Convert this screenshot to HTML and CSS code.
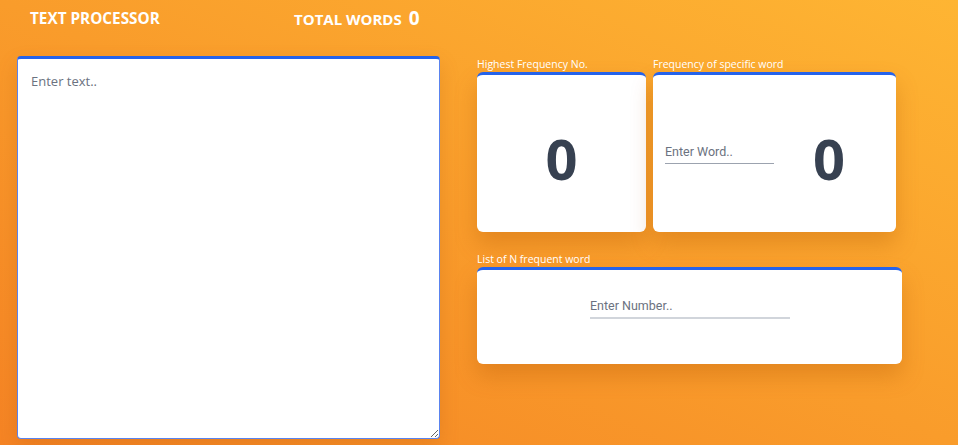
FILE: index.html
```html
<!DOCTYPE html>
<html lang="en">
<head>
<meta charset="utf-8">
<title>Text Processor</title>
<link rel="stylesheet" href="styles.css">
</head>
<body>
<header class="topbar">
  <h1 class="title">TEXT PROCESSOR</h1>
  <div class="total">TOTAL WORDS <span class="total-num">0</span></div>
</header>
<main class="layout">
  <textarea class="editor" placeholder="Enter text.."></textarea>
  <section class="side">
    <div class="row">
      <div class="block block-high">
        <div class="label">Highest Frequency No.</div>
        <div class="card card-center">
          <span class="big">0</span>
        </div>
      </div>
      <div class="block block-word">
        <div class="label">Frequency of specific word</div>
        <div class="card card-word">
          <input class="field field-word" type="text" placeholder="Enter Word..">
          <span class="big big-word">0</span>
        </div>
      </div>
    </div>
    <div class="block block-list">
      <div class="label">List of N frequent word</div>
      <div class="card card-list">
        <input class="field field-num" type="text" placeholder="Enter Number..">
      </div>
    </div>
  </section>
</main>
</body>
</html>
```
FILE: styles.css
```css
* { box-sizing: border-box; }
html, body { margin: 0; height: 100%; }
body {
  width: 958px;
  height: 445px;
  overflow: hidden;
  font-family: "Open Sans", "Noto Sans", sans-serif;
  background: linear-gradient(to top right, #f58424 0%, #f99c2b 50%, #feb533 100%);
  color: #fff;
}
.topbar {
  display: flex;
  align-items: baseline;
  padding: 4px 0 0 30px;
  height: 56px;
}
.title {
  margin: 0;
  font-size: 15.3px;
  font-weight: 700;
  width: 264px;
}
.total {
  font-size: 15px;
  font-weight: 700;
  position: relative;
  top: 1px;
}
.total-num {
  font-size: 19px;
  margin-left: 3px;
}
.layout {
  display: flex;
  align-items: flex-start;
  padding-left: 17px;
  gap: 37px;
}
.editor {
  width: 423px;
  height: 383px;
  border: 1px solid #5a83ee;
  border-top: 3px solid #2563eb;
  border-radius: 4px;
  padding: 13px 13px;
  font-family: "Open Sans", sans-serif;
  font-size: 13px;
  color: #374151;
  resize: both;
  outline: none;
  box-shadow: 0 8px 20px rgba(160, 70, 0, 0.18);
}
.editor::placeholder { color: #6b7280; }
.side {
  display: flex;
  flex-direction: column;
  gap: 20px;
  padding-top: 1px;
}
.row {
  display: flex;
  gap: 7px;
}
.label {
  font-size: 10.5px;
  line-height: 15px;
  color: #fff;
  white-space: nowrap;
}
.card {
  background: #fff;
  border-top: 3px solid #2563eb;
  border-radius: 6px;
  box-shadow: 0 12px 22px rgba(170, 80, 0, 0.28);
}
.block-high .card { width: 169px; height: 160px; }
.block-word .card { width: 243px; height: 160px; }
.card-center {
  display: flex;
  align-items: center;
  justify-content: center;
  padding-top: 8px;
}
.big {
  font-size: 56px;
  font-weight: 700;
  color: #374151;
  line-height: 1;
}
.card-word {
  display: flex;
  align-items: center;
  padding: 8px 0 0 12px;
}
.big-word { margin-left: 39px; }
.field {
  border: none;
  background: transparent;
  font-family: Roboto, "Open Sans", sans-serif;
  font-size: 12.5px;
  color: #374151;
  outline: none;
  padding: 0 0 4px 0;
}
.field::placeholder { color: #6b7280; }
.field-word {
  width: 109px;
  border-bottom: 1px solid #9ca3af;
  margin-top: -7px;
}
.card-list {
  width: 425px;
  height: 97px;
  display: flex;
  justify-content: center;
  align-items: flex-start;
  padding: 28px 0 0 0;
}
.field-num {
  width: 200px;
  border-bottom: 2px solid #d1d5db;
  margin-left: 1px;
}
```
